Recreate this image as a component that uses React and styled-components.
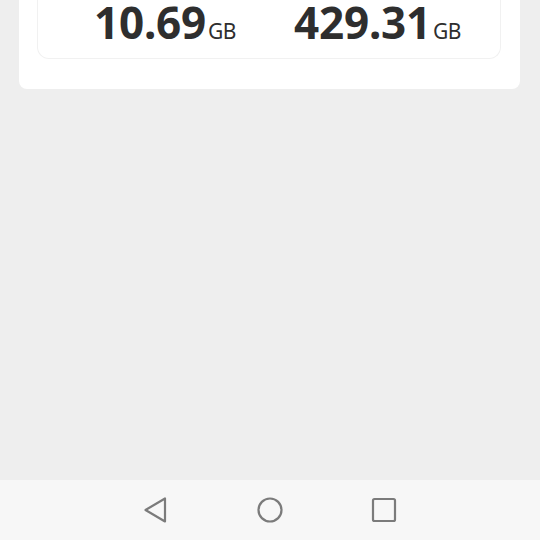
import React from 'react';
import styled, { createGlobalStyle } from 'styled-components';

const GlobalStyle = createGlobalStyle`
  html, body {
    margin: 0;
    padding: 0;
    background: #eeeeee;
    font-family: "Noto Sans", "Open Sans", sans-serif;
  }
`;

const Screen = styled.div`
  width: 540px;
  height: 540px;
  display: flex;
  flex-direction: column;
  background: #eeeeee;
  overflow: hidden;
`;

const Content = styled.div`
  flex: 1;
  padding: 0 20px 0 19px;
`;

const StorageCard = styled.div`
  background: #ffffff;
  border-radius: 0 0 8px 8px;
  padding: 0 19px 30px 18px;
`;

const UsageBox = styled.div`
  height: 59px;
  box-sizing: border-box;
  border: 1px solid #f1f1f1;
  border-top: none;
  border-radius: 0 0 12px 12px;
  display: flex;
  align-items: flex-end;
  padding: 0 0 14px 56px;
  gap: 58px;
`;

const Stat = styled.div`
  display: flex;
  align-items: baseline;
  color: #2e2e2e;
  line-height: 1;
`;

const Value = styled.span`
  font-size: 44px;
  font-weight: 700;
  letter-spacing: -0.2px;
`;

const Unit = styled.span`
  font-size: 21px;
  font-weight: 400;
  margin-left: 2px;
  letter-spacing: -0.5px;
`;

const NavBar = styled.div`
  height: 60px;
  background: #f7f7f7;
  display: flex;
  align-items: center;
  justify-content: center;
  gap: 82px;
`;

const NavButton = styled.div`
  width: 32px;
  height: 32px;
  display: flex;
  align-items: center;
  justify-content: center;
  color: #7b7b7b;

  svg {
    width: 32px;
    height: 32px;
  }
`;

const stats = [
  { value: '10.69', unit: 'GB' },
  { value: '429.31', unit: 'GB' },
];

export default function App() {
  return (
    <>
      <GlobalStyle />
      <Screen>
        <Content>
          <StorageCard>
            <UsageBox>
              {stats.map((s) => (
                <Stat key={s.value}>
                  <Value>{s.value}</Value>
                  <Unit>{s.unit}</Unit>
                </Stat>
              ))}
            </UsageBox>
          </StorageCard>
        </Content>
        <NavBar>
          <NavButton>
            <svg viewBox="0 0 32 32" fill="none">
              <path d="M25 4.5V27.5L5.5 16Z" stroke="currentColor" strokeWidth="2.2" strokeLinejoin="round" />
            </svg>
          </NavButton>
          <NavButton>
            <svg viewBox="0 0 32 32" fill="none">
              <circle cx="16" cy="16" r="11.5" stroke="currentColor" strokeWidth="2.2" />
            </svg>
          </NavButton>
          <NavButton>
            <svg viewBox="0 0 32 32" fill="none">
              <rect x="5" y="5" width="22" height="22" rx="1.5" stroke="currentColor" strokeWidth="2.2" />
            </svg>
          </NavButton>
        </NavBar>
      </Screen>
    </>
  );
}
